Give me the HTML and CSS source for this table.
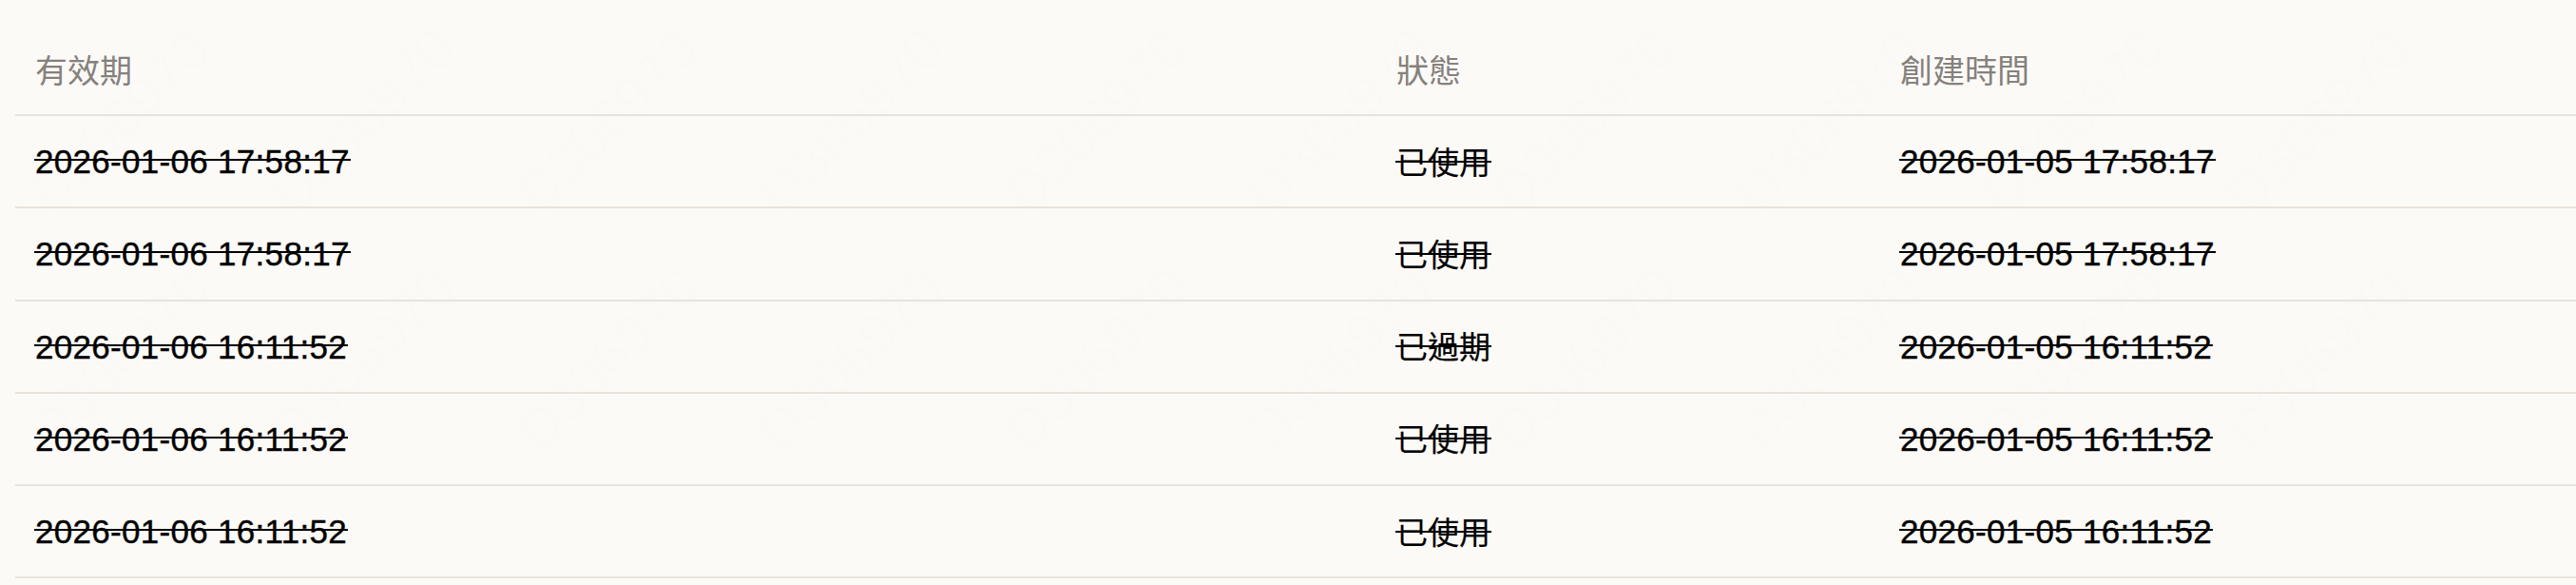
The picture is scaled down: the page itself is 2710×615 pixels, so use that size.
FILE: index.html
```html
<!DOCTYPE html>
<html lang="zh-Hant">
<head>
<meta charset="utf-8">
<title>記錄</title>
<link rel="stylesheet" href="styles.css">
</head>
<body>
<div class="page">
  <div class="watermark" aria-hidden="true">
    <span>D306970</span><span>D306970</span><span>D306970</span><span>D306970</span><span>D306970</span><span>D306970</span><span>D306970</span><span>D306970</span><span>D306970</span><span>D306970</span>
    <span>D306970</span><span>D306970</span><span>D306970</span><span>D306970</span><span>D306970</span><span>D306970</span><span>D306970</span><span>D306970</span><span>D306970</span><span>D306970</span>
  </div>
  <div class="table">
    <div class="row head">
      <div class="cell">有效期</div>
      <div class="cell">狀態</div>
      <div class="cell">創建時間</div>
    </div>
    <div class="row">
      <div class="cell"><span class="strike num">2026-01-06 17:58:17</span></div>
      <div class="cell"><span class="strike cjk">已使用</span></div>
      <div class="cell"><span class="strike num">2026-01-05 17:58:17</span></div>
    </div>
    <div class="row">
      <div class="cell"><span class="strike num">2026-01-06 17:58:17</span></div>
      <div class="cell"><span class="strike cjk">已使用</span></div>
      <div class="cell"><span class="strike num">2026-01-05 17:58:17</span></div>
    </div>
    <div class="row">
      <div class="cell"><span class="strike num">2026-01-06 16:11:52</span></div>
      <div class="cell"><span class="strike cjk">已過期</span></div>
      <div class="cell"><span class="strike num">2026-01-05 16:11:52</span></div>
    </div>
    <div class="row">
      <div class="cell"><span class="strike num">2026-01-06 16:11:52</span></div>
      <div class="cell"><span class="strike cjk">已使用</span></div>
      <div class="cell"><span class="strike num">2026-01-05 16:11:52</span></div>
    </div>
    <div class="row">
      <div class="cell"><span class="strike num">2026-01-06 16:11:52</span></div>
      <div class="cell"><span class="strike cjk">已使用</span></div>
      <div class="cell"><span class="strike num">2026-01-05 16:11:52</span></div>
    </div>
  </div>
</div>
</body>
</html>
```

FILE: styles.css
```css
html, body {
  margin: 0;
  padding: 0;
  background: #fcfaf7;
}

body {
  width: 2710px;
  height: 615px;
  overflow: hidden;
  font-family: "Liberation Sans", "Noto Sans CJK TC", sans-serif;
  color: #000;
}

.page {
  position: relative;
  height: 615px;
  padding: 25px 0 0 16px;
  box-sizing: border-box;
  overflow: hidden;
}

.table {
  position: relative;
  z-index: 1;
  display: flex;
  flex-direction: column;
}

.row {
  display: grid;
  grid-template-columns: 1432px 530px 1fr;
  height: 97.2px;
  box-sizing: border-box;
  border-bottom: 2px solid #e8e3db;
  align-items: center;
}

.cell {
  padding-left: 21px;
  font-size: 35px;
  line-height: 35px;
  white-space: nowrap;
}

.head .cell {
  font-family: "Noto Sans CJK TC", sans-serif;
  font-size: 34px;
  color: #85817c;
}

.strike {
  display: inline-block;
  line-height: 35px;
  height: 35px;
  background-image: linear-gradient(#000, #000);
  background-repeat: no-repeat;
  background-size: 100% 2px;
  padding: 0 1px;
  margin-left: -1px;
  -webkit-text-stroke: 0.4px #000;
}

.num {
  font-family: "Liberation Sans", sans-serif;
  letter-spacing: 0.3px;
  background-position: 0 15px;
}

.cjk {
  font-family: "Noto Sans CJK TC", sans-serif;
  font-size: 33px;
  background-position: 0 17px;
  -webkit-text-stroke: 0.2px #000;
}

.watermark {
  position: absolute;
  z-index: 0;
  left: -4px;
  top: 2px;
  display: grid;
  grid-template-columns: repeat(10, 257px);
  grid-auto-rows: 250px;
  pointer-events: none;
}

.watermark span {
  display: flex;
  align-items: center;
  justify-content: center;
  font-family: "Liberation Sans", sans-serif;
  font-size: 60px;
  color: #fbf9f6;
  transform: rotate(-45deg);
  white-space: nowrap;
}
```
